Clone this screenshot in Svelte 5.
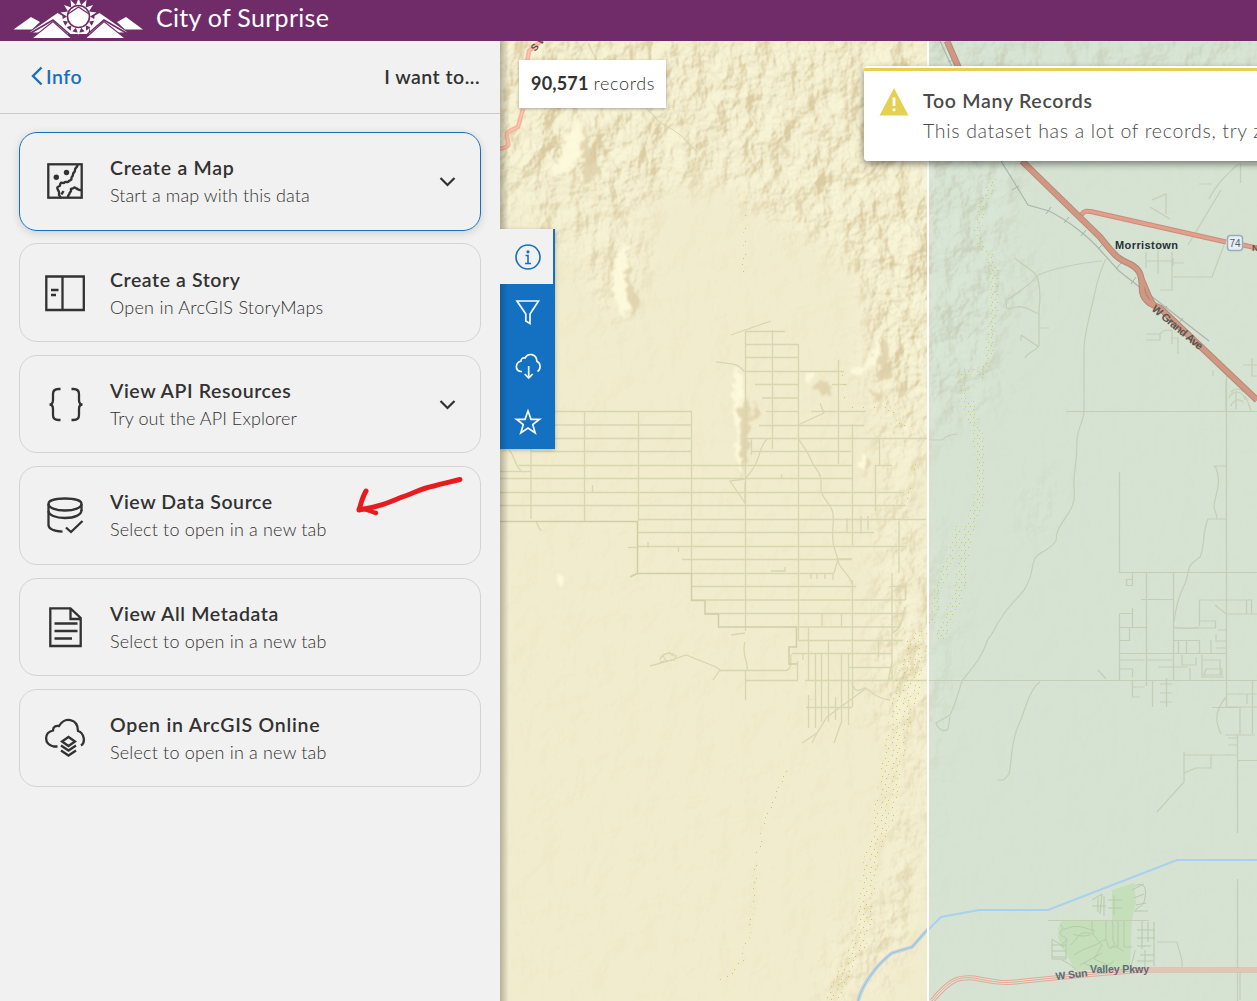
<script>
  const actions = [
    { icon: 'map', title: 'Create a Map', text: 'Start a map with this data', expand: true, active: true, track: [0.76, 0.09] },
    { icon: 'story', title: 'Create a Story', text: 'Open in ArcGIS StoryMaps', track: [0.58, 0.25] },
    { icon: 'api', title: 'View API Resources', text: 'Try out the API Explorer', expand: true, track: [0.57, 0.08] },
    { icon: 'data', title: 'View Data Source', text: 'Select to open in a new tab', track: [0.58, 0.18] },
    { icon: 'doc', title: 'View All Metadata', text: 'Select to open in a new tab', track: [0.64, 0.18] },
    { icon: 'cloud', title: 'Open in ArcGIS Online', text: 'Select to open in a new tab', track: [0.75, 0.18] }
  ];

  // Rays of the sun in the logo, alternating long and short radii.
  const rays = Array.from({ length: 28 }, (_, i) => {
    const a = (i * Math.PI) / 14 - Math.PI / 2;
    const r = i % 2 ? 11.5 : 18.5;
    return `${(78.5 + r * Math.cos(a)).toFixed(1)},${(16.5 + r * Math.sin(a)).toFixed(1)}`;
  }).join(' ');

  // Street grid: [x1, x2, y] for east-west and [x, y1, y2] for north-south.
  const ew = [
    [555, 691, 411.5], [555, 691, 425], [555, 691, 438.5], [531, 691, 451.5], [519, 852, 465.5],
    [500, 852, 478.5], [500, 904, 492.5], [500, 906, 505.5], [638, 926, 519.5], [638, 874, 532.5],
    [638, 906, 546.5], [682, 852, 559.5], [691, 833, 573.5], [691, 856, 586.5], [890, 905, 586.5],
    [691, 905, 600], [705, 904, 613.5], [798, 903, 640.5], [792, 892, 653.5], [849, 892, 667.5],
    [745, 798, 680.5], [805, 928, 680.5], [745, 798, 344.5], [745, 798, 357.5], [745, 844, 371.5],
    [755, 798, 384.5], [832, 847, 384.5], [762, 798, 398], [766, 798, 411.5], [811, 866, 411.5],
    [759, 864, 425.5], [746, 928, 438.5], [751, 851, 451.5], [745, 785, 331.5], [806, 852, 707.5],
    [500, 531, 471.5], [875, 892, 465.5], [628, 638, 547.5], [797, 900, 627]
  ];
  const ns = [
    [531, 449, 519], [584.5, 411, 521], [638.5, 411, 521], [691.5, 411, 574], [745.5, 331, 631],
    [745.5, 670, 700], [772.5, 330, 449], [798.5, 344, 640], [838.5, 360, 464], [852.5, 424, 545],
    [852.5, 580, 707], [892, 573, 680], [899, 521, 573], [905.5, 586, 600], [879.5, 438, 465],
    [875.5, 465, 511], [822, 613, 627], [841.5, 613, 627], [808.5, 627, 680], [828.5, 640, 722],
    [815.5, 653, 728], [821.5, 653, 722], [841.5, 653, 723], [848.5, 653, 725], [835.5, 697, 720],
    [808.5, 695, 728], [751.5, 438, 455], [592.5, 485, 492], [797.5, 661, 680], [803, 653, 660],
    [811, 699, 700], [781.5, 474, 479], [861, 516, 534], [868, 516, 530], [847, 518, 533], [878.5, 640, 657]
  ];
  const east = [
    'M928 680.5H1257M1066 411.5H1257M1119.5 472V572.5H1257M1226.5 370V707H1257M1146.5 573V686M1173.5 573V680',
    'M1132.5 573v12.5h-6v-6h6M1141 599.5h32M1119.5 613.5h13v12M1119.5 613.5v67M1119.5 627.5h27M1119.5 653.5h107M1132.5 608v20M1119.5 640.5h10v-13M1173.5 640.5h26M1173.5 628h42v-7h-15',
    'M1119.5 660h25M1119.5 669h13v8M1132.5 681v16h7M1132.5 687h12M1152.5 681v26M1166.5 678v29M1160 684h12M1160 693h12M1160 702h12M1146.5 660h26M1158 667h30M1190 668v12M1178.5 640v13M1186.5 640v13M1199.5 640v13M1211 640v13M1182 655v10h14v-8M1202 655v22h22M1202 660h18v15M1206 669h16v6h-18z',
    'M1199.5 600v26M1199.5 600h52v13M1215 605l11 9h31M1218 630h8M1216 634v7h10M1216 648h10M1238 707.5h-26M1226.5 694h30M1237.5 735v98M1237.5 760.5h20M1240 707v28M1252.5 680v54M1247 694v10M1228 738h9M1228 745h9M1184 755h53M1184 752v30l-27 30M1211 755v13h-15l-12 5M1237.5 879v122M1225 735h30',
    'M1226 697c-14 17-9 28-5 37M1246.5 600v14M1213 466h14M1215 466c6 12 3 22 0 34s2 10 2 19M1226 519h-18c-6 14-3 28-8 38c-14 10-10 10-13 20c-2 12-9 12-13 45M1173 627c8 2 20 2 26 0',
    'M1106 259c-8 14-10 30-14 46c-4 18-8 30-8 45v61c0 10-7 18-7 30c0 28-4 30-3 46c4 28-18 32-18 54c-12 16-20 6-24 28c-4 26-20 30-30 48c-10 14-8 16-14 22c-8 22-14 26-26 42c-6 20-8 26-12 34l-14 8c2 6 8 10 12 6l2-12',
    'M1040 682c-12 8-16 34-22 44c-8 20-6 36-9 48c-6 8-6 6-12 6M1038 275c20-8 44-12 64-14M1015 258c8 8 16 10 22 18c4 12 3 28 2 32v38c-4 6-12 6-14 12M1037 276c-8 10-16 14-30 24c-2 12 0 8 6 8c10-4 16 2 26 6M1039 328h10M1021 335l18 12M1021 335v6M928 440h14c4-4 8-6 16-6',
    'M1212 184h-13M1221 190l-33 55M1257 165h-20c-10 10-20 18-28 34M1240.5 163v20M1173 258v8M1146 244h26M1146 252v16M1158 240v34M1173 277h39l12-32M1146 261h26M1160 290h12v-38M1172 263h12M1146 334h14v6h-14M1160 334c2-4 6-4 12-4v14M1172 338h6v16M1243 365h14M1252 358v18h5',
    'M1213 370v6M1226 380v31M1150 207l20 12M1152 200l14-6v20M1098 670l8 9M1048 920.5h101M1157 942h20c2 10 6 16 5 25M1240 970v30M1231 392c4-4 10-4 12 0M1229 398c4-8 14-8 16 2M1231 406c2-6 8-8 12-4M1236 391v18M1245 396c4 6 4 10 6 15'
  ];
  const golf = [
    'M1060 925c8 4-6 8 4 12s-8 6 0 10l-12-8v20h14v-20M1052 945h14M1052 951h14M1052 957h14M1062 960c20 10 18 20 20 12M1063 930c16-8 24 0 30 0s-4 10-20 4',
    'M1070 945c10-6 6-14 20-12M1074 955c12-8 20-8 28-14s4 16 12 4M1080 965l22-12M1084 963l16 8 14-10M1092 921v12l10 12-8 14 14 6M1106 921v20M1112 921c4 12-6 22 12 30M1118 921v26h-8M1124 921v26h8M1108 900h14M1108 908h14M1114 895v20',
    'M1092 900l10-6-2 20M1092 906h14M1098 898v14M1104 896v20M1135 886c8-4 12 0 10 12s-8 6-10 14M1132 890l12-6M1134 898l10-4M1136 905l10-2M1136 911h12M1137 930h18M1137 938h18M1137 946h14M1142 921v28M1148 922v20M1154 922v44M1140 955h14M1137 961h16M1145 950v20M1135 950c-4 20-4 10-4 22'
  ];
</script>

<div class="app">
  <header>
    <svg class="logo" width="150" height="41" viewBox="0 0 150 41">
      <path fill="#fff" d="M13.500 29.500 31 17l9 5-8 7.500zM143 29.500 126 17l-9 5 8 7.500zM29.500 32.500 57.500 13l7 4 4 15.500zM127.500 32.500 99.500 13l-7 4-4 15.500zM67 25h23v9H67z" />
      <path fill="none" stroke="#702b69" stroke-width="1.600" d="M29 34 53 20l21 18M128 34 104 20 83 38" />
      <circle cx="78.500" cy="16.500" r="16" fill="#702b69" />
      <polygon points={rays} fill="#fff" />
      <circle cx="78.500" cy="16.500" r="11" fill="#fff" stroke="#702b69" stroke-width="1.600" />
      <path fill="none" stroke="#702b69" stroke-width="1.200" d="M68 14l10.500-7L89 14" />
      <path fill="#fff" stroke="#702b69" stroke-width="1.200" d="M31.500 38.600 53 21.500l19 17.100zM125.500 38.600 104 21.500 85 38.600z" />
    </svg>
    <h1>City of Surprise</h1>
  </header>

  <main>
    <aside>
      <div class="panel-head">
        <a class="back" href="#info">
          <svg width="12" height="20" viewBox="0 0 12 20"><path d="M10.500 1.500 2 10l8.500 8.500" fill="none" stroke="currentColor" stroke-width="2.400" /></svg>
          <span>Info</span>
        </a>
        <h2>I want to...</h2>
      </div>
      <div class="cards">
        {#each actions as a}
          <section class="card" class:active={a.active}>
            <svg class="icon" width="42" height="42" viewBox="0 0 42 42" fill="none" stroke="#323232" stroke-width="2.300">
              {#if a.icon === 'map'}
                <rect x="4.300" y="4.300" width="33.400" height="33.400" />
                <circle cx="12.300" cy="17.300" r="2.700" fill="#323232" stroke="none" />
                <circle cx="22.500" cy="12.500" r="2.700" fill="#323232" stroke="none" />
                <path stroke-width="2.400" d="M33.500 5c0 3-2.500 2-2.500 5s-2 2-2 4.500-2 2-1.500 4-2.500 1.500-3 3-3-.5-4 1-3-1-4 1 .5 2-2 3-.5 3 0 4.500 1 1 .5 3 1.500 1 1.500 4.500M19.500 31l-2 3.500M37 30c-2.500.5-3-1-4.500-1.500s-1.500-2-3-.5-3 0-2.500 2-1.500 2-1.500 3.500-1.500 1-1.500 3.500" />
              {:else if a.icon === 'story'}
                <path d="M2.300 4.500h37.500v33.500H2.300zM18.500 4.500v33.500M7 18h7.500M7 23h5" />
              {:else if a.icon === 'api'}
                <path d="M16.500 6h-2c-4 0-5.500 2-5.500 5v6c0 3-1 4.500-3.500 4.500 2.500 0 3.500 1.500 3.500 4.500v6c0 3 1.500 5 5.500 5h2M27.500 6h2c4 0 5.500 2 5.500 5v6c0 3 1 4.500 3.500 4.500-2.500 0-3.500 1.500-3.500 4.500v6c0 3-1.500 5-5.500 5h-2" />
              {:else if a.icon === 'data'}
                <path d="M37.500 17V10c0-3.500-7-5.500-16.500-5.500S4.500 6.500 4.500 10v21c0 3.500 5 6 14 6.700" />
                <path d="M4.500 10c0 3.500 7 6.500 16.500 6.500S37.500 13.500 37.500 10M4.500 17c0 4 7 7 16.500 7s16.500-3 16.500-8M22 33.500l5 4.500L38.500 27" />
              {:else if a.icon === 'doc'}
                <path d="M6.300 2.300h20.200l10.200 9.700v28H6.300zM26.500 2.300v10.700h10.500M10.500 17.500h23M10.500 25h23M10.500 32.500h17.500" />
              {:else}
                <path d="M13.500 29.500H9.500C-.5 27 0 15.500 9 13.500c0-4 3-5 6-4.500C20-.5 34 1 34 14c6 2 8 11 3 14.500" />
                <path d="M18 24.500l6.500-4.500L31 24.500l-6.500 4.500zM17 28.500l7.500 5 7.500-5M17 33.500l7.500 5 7.500-5" />
              {/if}
            </svg>
            <div class="copy">
              <h3 style:letter-spacing="{a.track[0]}px">{a.title}</h3>
              <p style:letter-spacing="{a.track[1]}px">{a.text}</p>
            </div>
            {#if a.expand}
              <svg class="chevron" width="18" height="12" viewBox="0 0 18 12"><path d="M2.500 3l7 7 7-7" fill="none" stroke="#323232" stroke-width="2.200" /></svg>
            {/if}
            {#if a.icon === 'data'}
              <svg class="scribble" width="112" height="44" viewBox="355 474 112 44" fill="none" stroke="#e81c1f" stroke-linecap="round" stroke-linejoin="round">
                <path stroke-width="5" d="M460 479.500c-10 2.500-18 4-26 6.500-12 2-20 7-32 11-14 6-24 10-43 13 2-6 3-12 7-19" />
                <path stroke-width="4.500" d="M359 509c6-1 10 2 17 4" />
              </svg>
            {/if}
          </section>
        {/each}
      </div>
    </aside>

    <div class="stage">
      <svg class="map" width="757" height="960" viewBox="500 41 757 960">
        <defs>
          <filter id="relief" x="500" y="41" width="757" height="960" filterUnits="userSpaceOnUse" color-interpolation-filters="sRGB">
            <feTurbulence type="fractalNoise" baseFrequency=".04 .034" numOctaves="4" seed="21" />
            <feDiffuseLighting surfaceScale="11" diffuseConstant="1" lighting-color="#fff" result="lit"><feDistantLight azimuth="215" elevation="45" /></feDiffuseLighting>
            <feColorMatrix in="lit" values="0 0 0 0 1  0 0 0 0 .992  0 0 0 0 .88  2.200 0 0 0 -1.600" result="hi" />
            <feColorMatrix in="lit" values="0 0 0 0 .84  0 0 0 0 .77  0 0 0 0 .60  -1.500 0 0 0 .980" result="lo" />
            <feMerge result="m"><feMergeNode in="hi" /><feMergeNode in="lo" /></feMerge>
            <feGaussianBlur in="m" stdDeviation=".6" result="b" />
            <feComposite in="b" in2="SourceAlpha" operator="in" />
          </filter>
          <filter id="soft" x="-30%" y="-30%" width="160%" height="160%"><feGaussianBlur stdDeviation="14" /></filter>
          <filter id="edge" x="-50%" y="-50%" width="200%" height="200%">
            <feTurbulence type="fractalNoise" baseFrequency=".12" numOctaves="2" seed="3" result="n" />
            <feDisplacementMap in="SourceGraphic" in2="n" scale="14" xChannelSelector="R" yChannelSelector="G" />
            <feGaussianBlur stdDeviation="1.200" />
          </filter>
          <pattern id="dots" width="9" height="8" patternUnits="userSpaceOnUse">
            <path fill="#c6c83c" d="M1 1h1v1H1zM5 3h1v1H5zM2 6h1v1H2zM7 6h1v1H7z" />
          </pattern>
          <pattern id="sparse" width="11" height="13" patternUnits="userSpaceOnUse">
            <path fill="#cccb50" d="M1 1h1v1H1zM5 4h1v1H5zM2 9h1v1H2zM8 7h1v1H8zM6 11h1v1H6z" />
          </pattern>
          <linearGradient id="panelshade"><stop stop-color="#000" stop-opacity=".25" /><stop offset="1" stop-color="#000" stop-opacity="0" /></linearGradient>
        </defs>
        <rect x="500" y="41" width="757" height="960" fill="#f1eccd" />

        <g filter="url(#relief)">
          <g filter="url(#soft)">
            <path fill-opacity=".05" d="M500 41h757v960H500z" />
            <path fill-opacity=".8" d="M490 30h530v150l-14 60 4 60-20 60-22 60-38-10-34-40-20-60-40-60-60-30-60-40-90 20-30-20-100-10z" />
            <path fill-opacity=".6" d="M490 150h140l20 110-30 70-50-80-80-30z" />
            <path fill-opacity=".6" d="M870 230h60l10 220-50 60-30-150zM880 500h40v170l-30 70-15-20z" />
            <path fill-opacity=".7" d="M935 160h60l10 100-6 140-50 30-30-90zM1000 30h260v60l-30 60-60-50-110 10-60-40z" />
            <path fill-opacity=".5" d="M930 500l30 110-30 190-10 110-24 60-20-40 24-150zM1010 250l40 20-20 50-30-20zM1040 450l20 60-20 30-20-10z" />
            <path fill-opacity=".5" d="M830 960l40-60 30 10-20 90h-60z" />
          </g>
        </g>

        <!-- isolated ridges -->
        <g filter="url(#edge)">
          <path fill="#fefadd" fill-opacity=".85" d="M739 365l6 20-1 40-3 50-4-6-3-60-1-30zM622 240l8 8-4 20 8 22-10 30-8-16-4-30zM880 326l-2 36-20 14-8-4 22-14zM860 450l8 8-4 14-6-6zM559 572l4 12-3 2-5-8zM578 105l4 50-12 18-20 2 14-30zM805 372l6-2 4 8-8 6z" />
          <path fill="#ddcea8" fill-opacity=".8" d="M742 395l8 10-2 50-6 24-3-60zM584 122l14 50-16 20zM628 262l4 24 8 20-6 12-10-40zM880 335l14 40-14 6zM868 390l16 4-8 8zM867 455l3 10-7 16zM782 138l8 14-10 6zM815 385l12-5 4 8-8 8zM755 400l6 18-12 4zM800 195l6 20-8-6z" />
        </g>

        <g fill="none" stroke="#d8d6b0" stroke-width="1.300">
          {#each ew as [x1, x2, y]}<path d="M{x1} {y}H{x2}" />{/each}
          {#each ns as [x, y1, y2]}<path d="M{x} {y1}V{y2}" />{/each}
          <path d="M716 362c20 2 22 2 29 10M767 439c-10 10-4 20-21 39M798 438c6 10 10 14 14 24 6 12 10 8 9 30 8 16 14 14 12 34-2 22 4 26 5 34 0 8 12 14 14 24M745 479l-15 2 15 22 0-20M731 635l14-2M838 559l-4 14M836 559h16M798 425l26-12-4-10" />
          <path d="M650 666l22-6 14-5 30 12 4 3-7 10M720 670.500h65c6 0 6-6 6-16M745 642c-4 14 4 20 2 28M660 660c2-8 12-8 16-4l-2 4-14 2M663 656l4 6M669 652l4 4M852 682c2 10 6 10 12 6 6 0 8 10 26 12M865 689l-38 28-10 16-15 10M817 733l-5 10M841 723l-7 20M888 682l4-20M892 633c10-4 10-14 13-26M509 450c6 6 5 14 12 21M536 522l5 9M648 542v6M678.500 546v6M811 574v5M817 574v5M825 574v5M833 573v7M771 571h14v-4M731 335l14-5 26-9" />
        </g>
        <g fill="none" stroke="#d0cda8" stroke-width="1.500">
          <path d="M500 521.500h137.500V573.500h54V600.500H705v13.500h13.500v13H796.500v20H789v17h8M638 573l-8 4" />
        </g>
        <g fill="none" stroke="#d6d2ab" stroke-width="1"><path d="M588 43l10 20M640 102c14 12 16 20 30 26 10 6 14 10 27 24" /></g>

        <g fill="none" stroke="url(#sparse)">
          <path stroke-width="15" d="M920 630c-8 30-16 40-20 70s-6 50-6 60-10 60-20 90-4 60-14 90-22 40-30 60" />
          <path stroke-width="22" d="M918 640c-4 40-14 60-20 90s-10 60-14 90" />
          <path stroke-width="8" d="M920 640c0 60-16 90-24 130" />
          <path stroke-width="4" d="M788 770c-10 20-30 60-32 100s-10 80-14 90-12 14-22 20M746 200l-1 60-3 14M844 375l2 32 44 2 14 18M916 460l-8 40" />
        </g>
        <path fill="none" stroke="#f8b39c" stroke-width="4.500" d="M541 41l-12 10-2 12M523 109l-5 18c-8 4-12 4-11 10 2 8 2 10-4 11l-4 1" />
        <path fill="none" stroke="#fad0ba" stroke-width="1" d="M541 41l-12 10-2 12M523 109l-5 18c-8 4-12 4-11 10 2 8 2 10-4 11l-4 1" />
        <text class="road" transform="translate(535 52) rotate(-48)" font-size="10">S W</text>
        <path fill="none" stroke="#c6d8dc" stroke-width="4" d="M858 1001c4-16 18-36 34-48l20-6 16-18" />
        <path fill="none" stroke="#9dc0e2" stroke-width="1.200" d="M858 1001c4-16 18-36 34-48l20-6 16-18" />

        <!-- service area -->
        <rect x="928" y="41" width="329" height="960" fill="#bedad6" fill-opacity=".54" />
        <path fill="#c6dfbb" d="M1112 890l22-7 2 20-4 17-2 45-6 5h-50c-4-16-18-24-16-38 0-8 4-11 4-11h50z" />
        <g fill="none" stroke="#c4ceb7" stroke-width="1.200">{#each east as d}<path {d} />{/each}</g>
        <g fill="none" stroke="#b6caab" stroke-width="1">{#each golf as d}<path {d} />{/each}</g>
        <g fill="none" stroke="url(#dots)" opacity=".8">
          <path stroke-width="8" d="M992 178c-4 20-12 30-14 50s12 20 16 40-2 60-6 90-10 10-14 14" />
          <path stroke-width="5" d="M974 372h-12l2 28" />
          <path stroke-width="11" d="M968 400c4 24 12 30 12 60s2 30-4 50-12 30-14 60-12 40-22 70" />
          <path stroke-width="8" d="M960 526c-8 20-10 40-22 60l-6 40" />
        </g>
        <path fill="none" stroke="#aad0ef" stroke-width="2" d="M928 930l13-13 38-7h69l129-50h80" />
        <path fill="none" stroke="#aab6ae" stroke-width="1.200" d="M940 41l12 26M1001 161l27 44 21 6c20 10 40 26 52 40l18 20 90 70" />
        <path fill="none" stroke="#a5b1a9" stroke-width="1" d="M948 62l5-2M1012 190l7-4M1046 214l5-7M1064 223l5-6M1081 236l5-6M1098 249l5-5M1116 269l5-6M1131 284l5-7M1162 312l5-6M1178 324l5-6" />
        <path fill="none" stroke="#cf8b77" stroke-width="5" d="M1081 215c4-5 7-4 12-3l133 30M1243 245l14 3" />
        <path fill="none" stroke="#dfa08e" stroke-width="3" d="M1081 215c4-5 7-4 12-3l133 30M1243 245l14 3" />
        <g fill="none" stroke-linejoin="round">
          <path stroke="#b08975" stroke-width="6.600" d="M947 41l13 30M1022 161l78 76c16 20 18 22 30 27 10 5 12 12 12 24s8 16 18 20l97 92" />
          <path stroke="#b08975" stroke-width="4.500" d="M1140 275c6 8 8 22 16 32" />
          <path stroke="#d29782" stroke-width="4.600" d="M947 41l13 30M1022 161l78 76c16 20 18 22 30 27 10 5 12 12 12 24s8 16 18 20l97 92" />
          <path stroke="#d29782" stroke-width="2.600" d="M1140 275c6 8 8 22 16 32" />
        </g>
        <path fill="none" stroke="#e5a697" stroke-width="5" d="M932 1001c20-24 28-24 42-23 20 4 30 6 50 3l60-6 60-5h113" />
        <path fill="none" stroke="#dfe4d2" stroke-width="3" d="M932 1001c20-24 28-24 42-23 20 4 30 6 50 3l60-6 60-5h113" />
        <path fill="none" stroke="#e5a697" stroke-width="1" d="M932 1001c20-24 28-24 42-23 20 4 30 6 50 3l60-6 60-5h113" />
        <rect x="1227.500" y="235.500" width="15" height="15" rx="3" fill="#e6eff3" stroke="#9aaeb9" stroke-width="1.500" />
        <text x="1229.500" y="247" class="shield">74</text>
        <text x="1115" y="249" class="town" textLength="63">Morristown</text>
        <text class="road" x="1252" y="251" font-size="9">N</text>
        <text class="road" transform="translate(1151 310) rotate(40)" font-size="11" textLength="63">W Grand Ave</text>
        <text class="road blue" transform="translate(1056 980) rotate(-7)" font-size="10.500" textLength="32">W Sun</text>
        <text class="road blue" transform="translate(1090 973)" font-size="10.500" textLength="59">Valley Pkwy</text>
        <path d="M928 41v960" stroke="#fdfefc" stroke-width="2" />
        <rect x="500" y="41" width="9" height="960" fill="url(#panelshade)" />
      </svg>

      <div class="count"><b>90,571</b> <span>records</span></div>

      <nav>
        <button class="on" aria-label="Info">
          <svg width="28" height="28" viewBox="0 0 28 28" fill="none" stroke="currentColor" stroke-width="1.600">
            <circle cx="14" cy="14" r="12" /><circle cx="14" cy="8.800" r="1.600" fill="currentColor" stroke="none" /><path d="M11.500 12.500H14V20.500M11 20.500h6" />
          </svg>
        </button>
        <button aria-label="Filter">
          <svg width="28" height="28" viewBox="0 0 28 28" fill="none" stroke="currentColor" stroke-width="1.700">
            <path d="M3 3h21.500L16 16v9.500L11.800 23v-7z" />
          </svg>
        </button>
        <button aria-label="Download">
          <svg width="28" height="28" viewBox="0 0 28 28" fill="none" stroke="currentColor" stroke-width="1.700">
            <path d="M8 18.500H6.500c-6-1.500-5-9 .5-10.500 0-2.500 2-3.500 4-3 3-5.500 11.500-4.500 12 3.500 4 1.500 4 8 .5 10M14.700 13v12M10.700 21l4 4 4-4" />
          </svg>
        </button>
        <button aria-label="Favorite">
          <svg width="28" height="28" viewBox="0 0 28 28" fill="none" stroke="currentColor" stroke-width="1.700">
            <path d="M14 3l3 8.300h8.500L18.700 16.500l2.500 8.500L14 20l-7.200 5 2.500-8.500L2.500 11.300H11z" />
          </svg>
        </button>
      </nav>

      <div class="alert">
        <svg width="30" height="28" viewBox="0 0 30 28"><path fill="#e5d052" d="M15 0l14.500 27.500H.5z" /><path fill="#fff" d="M13.600 9.500h2.800v8.500h-2.800zM13.600 20.500h2.800v2.800h-2.800z" /></svg>
        <div>
          <strong>Too Many Records</strong>
          <p>This dataset has a lot of records, try zooming in</p>
        </div>
      </div>
    </div>
  </main>
</div>

<style>
  :global(body) { margin: 0; overflow: hidden; }
  .app { width: 1257px; height: 1001px; overflow: hidden; font-family: Lato, "Open Sans", sans-serif; color: #323232; }
  h1, h2, h3, p { margin: 0; }
  header { height: 41px; background: #702b69; display: flex; align-items: center; }
  h1 { color: #fff; font-size: 25px; font-weight: 400; line-height: 30px; margin: -7px 0 0 6px; letter-spacing: .3px; white-space: nowrap; }
  main { display: flex; height: 960px; }
  aside { width: 500px; flex: none; background: #f1f1f1; }
  .panel-head { box-sizing: border-box; height: 73px; border-bottom: 1px solid #cacaca; display: flex; justify-content: space-between; align-items: center; padding: 0 20px 2px 31px; }
  .back { display: flex; align-items: center; gap: 3px; color: #1470c0; text-decoration: none; font-size: 19.500px; font-weight: 600; letter-spacing: .5px; }
  h2 { font-size: 19.500px; font-weight: 600; letter-spacing: .48px; }
  .cards { padding: 18px 19px; display: grid; gap: 12.900px; }
  .card { box-sizing: border-box; height: 98.500px; border: 1px solid #d3d3d3; border-radius: 18px; display: flex; align-items: center; padding: 0 24px; position: relative; }
  .active { border-color: #1470c0; box-shadow: 0 2px 8px rgba(0, 0, 0, .14); }
  .icon { margin-right: 24px; flex: none; }
  .copy { flex: 1; white-space: nowrap; padding-top: 1px; }
  h3 { font-size: 19.500px; line-height: 27px; font-weight: 600; }
  .card p { font-size: 18px; line-height: 28px; font-weight: 300; }
  .scribble { position: absolute; left: 335px; top: 7px; }
  .stage { position: relative; flex: 1; overflow: hidden; }
  .map { display: block; }
  .town { font: 700 11px "Liberation Sans", sans-serif; fill: #263238; }
  .shield { font: 10px "Liberation Sans", sans-serif; fill: #50606a; }
  .road { font-family: "Liberation Sans", sans-serif; font-weight: 700; fill: #5b5553; }
  .blue { fill: #5d6c78; }
  .count { position: absolute; left: 19px; top: 19px; width: 147px; height: 48px; box-sizing: border-box; padding-left: 12px; line-height: 47px; background: #fff; box-shadow: 0 1px 3px rgba(0, 0, 0, .3); font-size: 18px; letter-spacing: .2px; white-space: nowrap; }
  .count span { font-weight: 300; letter-spacing: .65px; }
  nav { position: absolute; left: 0; top: 188px; width: 55px; background: linear-gradient(90deg, #115c9c, #1470c0 8px); box-shadow: 0 1px 4px rgba(0, 0, 0, .25); }
  button { display: flex; width: 55px; height: 55px; padding: 0; border: 0; background: none; color: #f4f8fc; align-items: center; justify-content: center; }
  .on { background: #f1f1f1; border-right: 2px solid #1470c0; color: #1470c0; padding: 0 0 0 2px; }
  .alert { position: absolute; left: 364px; top: 25px; width: 480px; height: 95px; box-sizing: border-box; background: linear-gradient(#fff 2px, #e5d052 2px, #e5d052 5px, #fff 5px); border-radius: 4px; box-shadow: 0 3px 7px rgba(0, 0, 0, .45); display: flex; gap: 14px; padding: 22px 0 0 15px; color: #4a4a4a; white-space: nowrap; }
  .alert svg { flex: none; }
  .alert strong { display: block; font-size: 19.500px; font-weight: 600; line-height: 27px; margin-top: -1px; letter-spacing: .72px; }
  .alert p { font-size: 19.500px; font-weight: 300; line-height: 34px; letter-spacing: .68px; }
</style>
